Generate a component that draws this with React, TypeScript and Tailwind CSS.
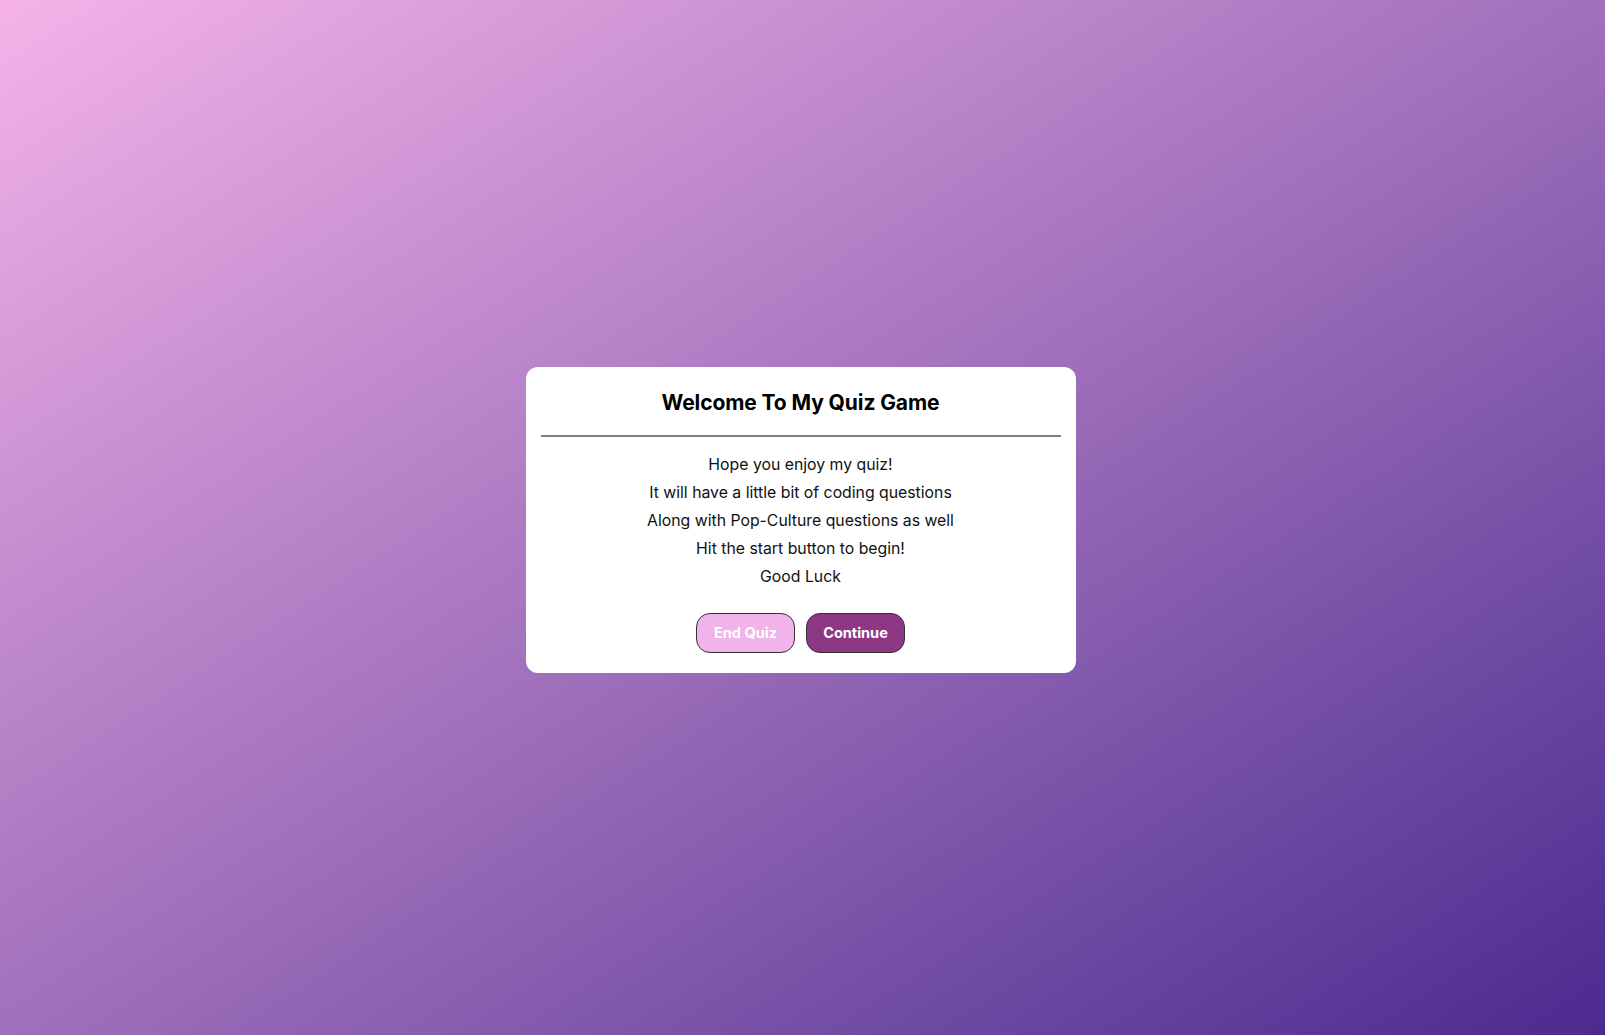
export default function App() {
  const lines = [
    'Hope you enjoy my quiz!',
    'It will have a little bit of coding questions',
    'Along with Pop-Culture questions as well',
    'Hit the start button to begin!',
    'Good Luck',
  ]

  return (
    <main
      className="min-h-screen w-full flex items-center justify-center bg-gradient-to-br from-[#f5b3e8] via-[#a070bb] to-[#4c2a8f]"
      style={{ fontFamily: 'Inter, "Noto Sans", sans-serif' }}
    >
      <div className="w-[550px] mr-[4px] mt-[4px] bg-white rounded-[12px] px-[15px] pt-[25px] pb-[20px] flex flex-col items-center">
        <h1 className="text-[21px] font-bold text-black leading-[22px] tracking-[-0.1px]">Welcome To My Quiz Game</h1>
        <hr className="w-full mt-[21px] border-0 border-t-2 border-[#808080]" />
        <div className="mt-[18px] flex flex-col items-center gap-[9px] text-[15.8px] text-[#111] leading-[19px]">
          {lines.map((l) => (
            <p key={l}>{l}</p>
          ))}
        </div>
        <div className="mt-[27px] flex gap-[11px]">
          <button className="w-[99px] h-[40px] rounded-[14px] border border-[#333] bg-[#f1b3e9] text-white text-[14.5px] font-bold">
            End Quiz
          </button>
          <button className="w-[99px] h-[40px] rounded-[14px] border border-[#333] bg-[#8d3785] text-white text-[14.5px] font-bold">
            Continue
          </button>
        </div>
      </div>
    </main>
  )
}
